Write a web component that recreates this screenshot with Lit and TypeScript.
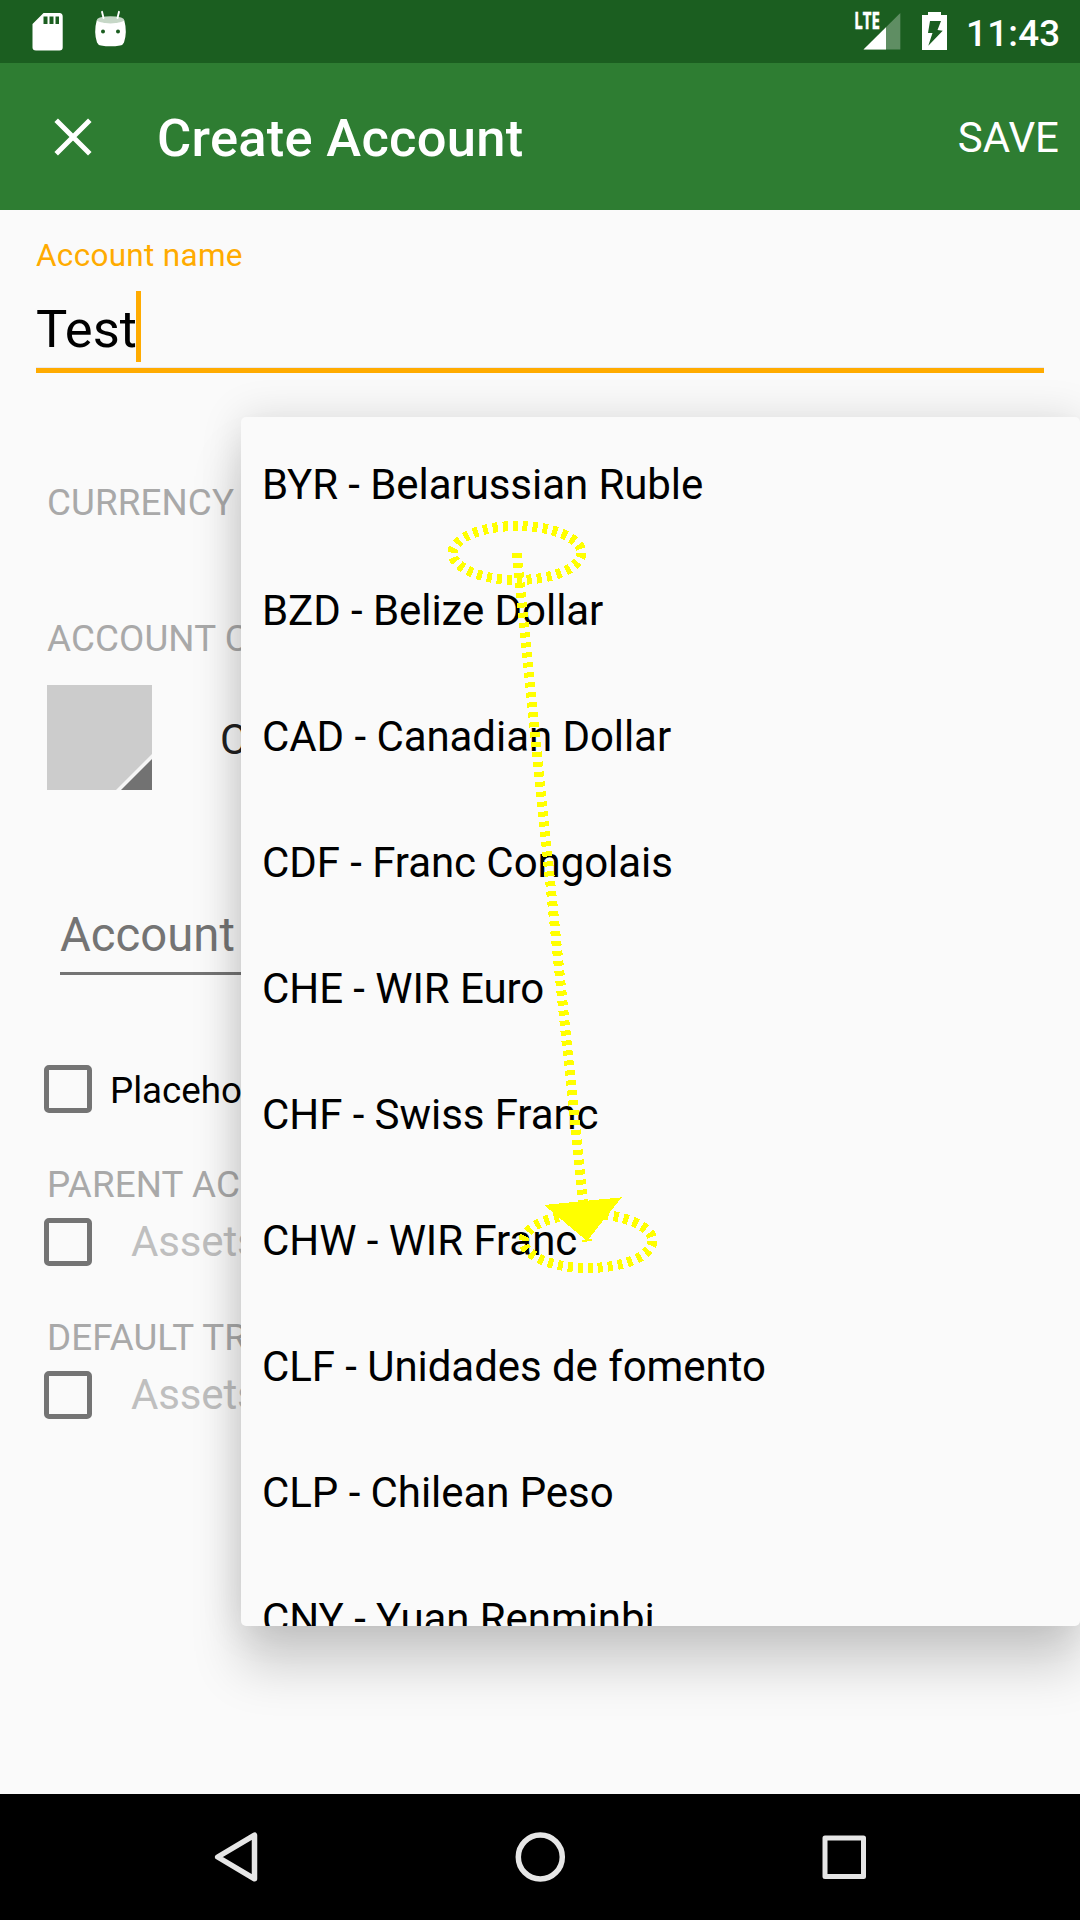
import { LitElement, html, css, svg } from "lit";
import { customElement } from "lit/decorators.js";

const CURRENCIES = [
  "BYR - Belarussian Ruble",
  "BZD - Belize Dollar",
  "CAD - Canadian Dollar",
  "CDF - Franc Congolais",
  "CHE - WIR Euro",
  "CHF - Swiss Franc",
  "CHW - WIR Franc",
  "CLF - Unidades de fomento",
  "CLP - Chilean Peso",
  "CNY - Yuan Renminbi",
];

@customElement("status-bar")
class StatusBar extends LitElement {
  static styles = css`
    :host { display: flex; height: 63px; background: #1b5e20; color: #fff; }
    .icons { display: block; width: 140px; height: 63px; }
    .spacer { flex: 1; }
    .clock { width: 93px; margin-right: 21px; text-align: right; font-size: 36.75px; font-weight: 500; line-height: 43px; letter-spacing: 0.25px; padding-top: 12px; height: 43px; white-space: nowrap; }
    .lte { font: 700 22.5px "Open Sans", Roboto, sans-serif; }
  `;
  render() {
    return html`
      <svg class="icons" viewBox="0 0 140 63" fill="#fff">
        <path fill-rule="evenodd" d="M43.5 13H59.5Q62.700 13 62.700 16.5V47.5Q62.700 50.500 59.5 50.500H36Q32.500 50.500 32.500 47.500V24ZM43.500 16.500V24H47.500V16.500ZM49.500 16.500V24H53.500V16.500ZM55.500 16.500V24H59V16.500Z"/>
        <path fill-rule="evenodd" d="M96.800 20Q110.500 26 124.200 20Q127.500 32 124 42.500Q123 45 120 45.500Q110.500 47.200 101 45.500Q98 45 97 42.500Q93.500 32 96.800 20ZM101 31.500a2 2 0 1 0 4 0a2 2 0 1 0 -4 0M116 31.500a2 2 0 1 0 4 0a2 2 0 1 0 -4 0"/>
        <ellipse cx="110.500" cy="19.800" rx="13.500" ry="3.600" fill="#c6d7c7"/>
        <path d="M102 11.800L103.500 18M119 11.800L117.500 18" stroke="#fff" stroke-width="1.900" stroke-linecap="round"/>
      </svg>
      <div class="spacer"></div>
      <svg class="icons" viewBox="826 0 140 63" fill="#fff">
        <text class="lte" x="854.300" y="29.300" textLength="25.500" lengthAdjust="spacingAndGlyphs" stroke="#fff" stroke-width=".5">LTE</text>
        <path d="M900.300 13V49.500H863.500Z" fill-opacity=".3"/>
        <path d="M886 27.300V49.500H863.500Z"/>
        <path fill-rule="evenodd" d="M928 12H941V15H947V50H922V15H928ZM930 21L928 33H932.500L928.300 45.700L942.700 30.700L937.500 30L941 21Z"/>
      </svg>
      <div class="clock">11:43</div>
    `;
  }
}

@customElement("app-bar")
class AppBar extends LitElement {
  static styles = css`
    :host { display: flex; align-items: center; height: 147px; background: #2e7d32; color: #fff; }
    .close { display: block; width: 40px; height: 40px; margin-left: 53px; }
    .title { margin-left: 64px; font-size: 52.5px; font-weight: 500; line-height: 62px; letter-spacing: 0.27px; padding-top: 3px; flex: 1; white-space: nowrap; }
    .save { font-size: 42px; line-height: 50px; padding-top: 3px; margin-right: 21px; }
  `;
  render() {
    return html`
      <svg class="close" viewBox="0 0 40 40"><path d="M3.200 3.200L36.800 36.800M36.800 3.200L3.200 36.800" stroke="#fff" stroke-width="5"/></svg>
      <div class="title">Create Account</div>
      <div class="save">SAVE</div>
    `;
  }
}

@customElement("account-form")
class AccountForm extends LitElement {
  static styles = css`
    :host { display: flow-root; height: 1584px; overflow: hidden; color: #000; white-space: nowrap; }
    .label { margin: 27px 0 0 36px; font-size: 31.5px; line-height: 37px; letter-spacing: 0.3px; color: #ffab00; }
    .input { display: flex; align-items: flex-start; margin: 17px 36px 0; height: 77px; border-bottom: 5px solid #ffab00; box-shadow: inset 0 -1px #e8e8f0; }
    .value { font-size: 52.5px; line-height: 62px; margin-top: 7px; width: 100px; }
    .caret { width: 5px; height: 71px; background: #ffab00; }
    .heading { font-size: 36.75px; line-height: 44px; height: 44px; margin-left: 47px; letter-spacing: 0.12px; color: #a9a9a9; }
    .currency { margin-top: 108px; }
    .color { margin-top: 92px; }
    .swatch-row { display: flex; align-items: center; height: 105px; margin: 24px 0 0 47px; }
    .swatch { display: block; width: 105px; height: 105px; }
    .type { margin-left: 68px; font-size: 42px; line-height: 50px; padding-top: 5px; color: #212121; }
    .description { box-sizing: border-box; margin: 115px 36px 0 60px; height: 69.5px; padding-top: 2px; border-bottom: 3px solid #747474; color: #747474; font-size: 47.25px; line-height: 56px; }
    .check { display: flex; align-items: center; height: 48px; margin-left: 44px; }
    .box { box-sizing: border-box; width: 48px; height: 48px; border: 5px solid #747474; border-radius: 5px; }
    .placeholder { margin-top: 90.5px; font-size: 36.75px; }
    .placeholder .text { margin-left: 18px; padding-top: 2px; }
    .account { font-size: 42px; color: #bfbfbf; margin-top: 11px; }
    .account .text { margin-left: 39px; padding-bottom: 2px; letter-spacing: -0.15px; }
    .parent { margin-top: 50px; }
    .transfer { margin-top: 50px; }
  `;
  render() {
    return html`
      <div class="label">Account name</div>
      <div class="input"><div class="value">Test</div><div class="caret"></div></div>
      <div class="heading currency">CURRENCY</div>
      <div class="heading color">ACCOUNT COLOR</div>
      <div class="swatch-row">
        <svg class="swatch" viewBox="0 0 105 105">
          <path d="M0 0H105V105H0Z" fill="#ccc"/>
          <path d="M105 69V105H69Z" fill="#f5f5f5"/>
          <path d="M105 74V105H74Z" fill="#727272"/>
        </svg>
        <div class="type">CASH</div>
      </div>
      <div class="description">Account description</div>
      <div class="check placeholder"><div class="box"></div><div class="text">Placeholder account</div></div>
      <div class="heading parent">PARENT ACCOUNT</div>
      <div class="check account"><div class="box"></div><div class="text">Assets</div></div>
      <div class="heading transfer">DEFAULT TRANSFER ACCOUNT</div>
      <div class="check account"><div class="box"></div><div class="text">Assets</div></div>
    `;
  }
}

@customElement("currency-menu")
class CurrencyMenu extends LitElement {
  static styles = css`
    :host { display: block; box-sizing: border-box; overflow: hidden; padding-top: 5px; background: #fafafa; border-radius: 5px; box-shadow: 0 42px 50px rgba(0, 0, 0, 0.17), 0 0 42px rgba(0, 0, 0, 0.13); }
    .item { height: 126px; line-height: 126px; padding-left: 21px; font-size: 42px; letter-spacing: -0.06px; color: #000; white-space: nowrap; }
  `;
  render() {
    return CURRENCIES.map((name) => html`<div class="item">${name}</div>`);
  }
}

@customElement("nav-bar")
class NavBar extends LitElement {
  static styles = css`
    :host { display: block; height: 126px; background: #000; }
    .keys { display: block; width: 1080px; height: 126px; }
  `;
  render() {
    return html`
      <svg class="keys" viewBox="0 0 1080 126" fill="none" stroke="#e6e6e6" stroke-width="5.500" stroke-linejoin="round">
        <path d="M254.500 41.200V84.800L217.700 63Z"/>
        <circle cx="540.300" cy="63" r="22"/>
        <rect x="825" y="44" width="38.500" height="38.500" stroke-width="5"/>
      </svg>
    `;
  }
}

@customElement("app-root")
class AppRoot extends LitElement {
  static styles = css`
    :host { display: block; position: relative; width: 1080px; height: 1920px; overflow: hidden; background: #fafafa; font-family: Roboto, sans-serif; }
    .menu { position: absolute; left: 241px; top: 417px; width: 839px; height: 1209px; }
    .gesture { position: absolute; left: 0; top: 0; width: 1080px; height: 1920px; pointer-events: none; }
  `;
  private touch(x: number, y: number) {
    return svg`<ellipse cx=${x} cy=${y} rx="64.500" ry="27" />`;
  }
  render() {
    return html`
      <status-bar></status-bar>
      <app-bar></app-bar>
      <account-form></account-form>
      <nav-bar></nav-bar>
      <currency-menu class="menu"></currency-menu>
      <svg class="gesture" viewBox="0 0 1080 1920" fill="none" stroke="#ff0" stroke-width="10" stroke-dasharray="5 5" shape-rendering="crispEdges">
        ${this.touch(517, 553)}
        ${this.touch(588, 1241)}
        <path d="M516.500 553L587 1241.500"/>
        <path d="M544 1205L621.700 1197.300L587 1241Z" fill="#ff0" stroke="none"/>
      </svg>
    `;
  }
}
